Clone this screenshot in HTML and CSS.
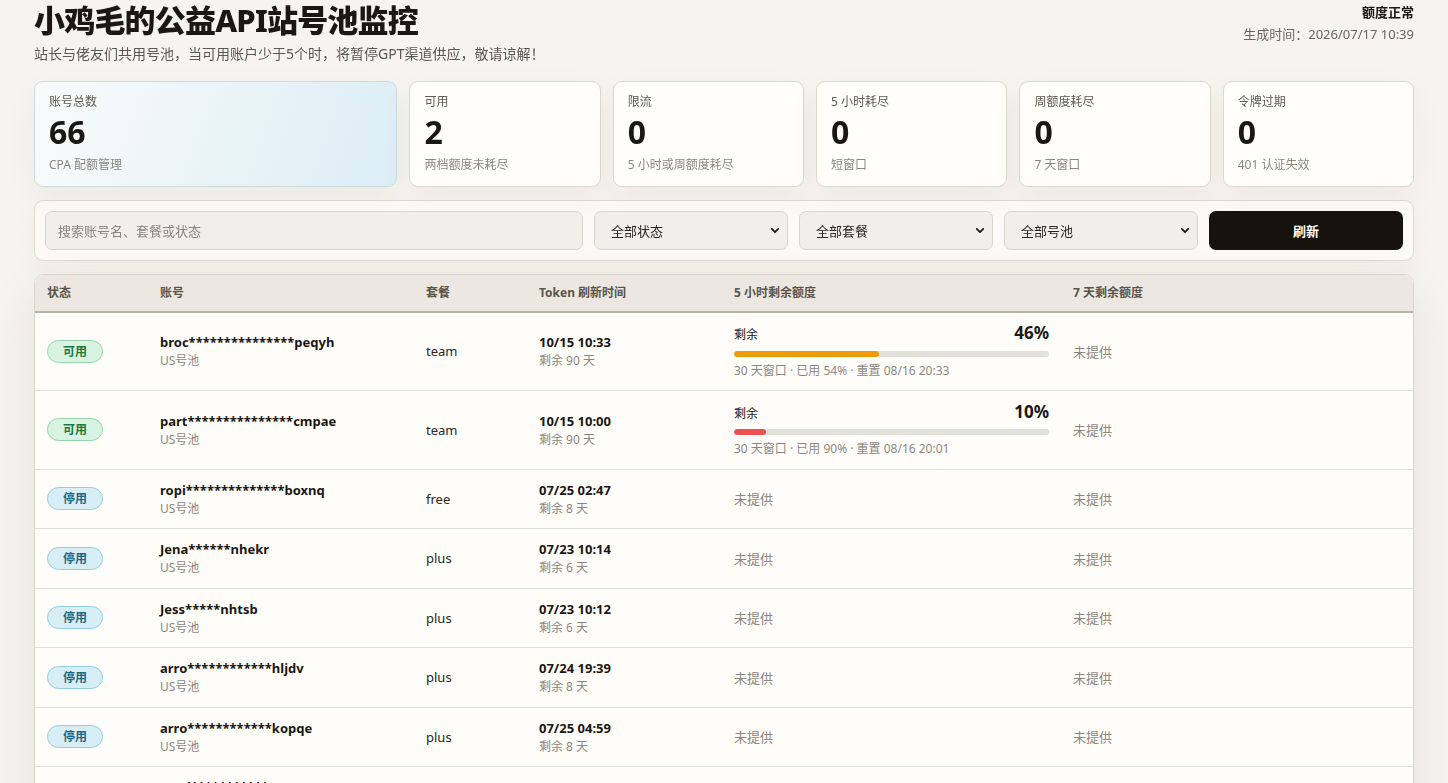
FILE: index.html
```html
<!DOCTYPE html>
<html lang="zh-CN">
<head>
  <meta charset="UTF-8">
  <meta name="viewport" content="width=device-width, initial-scale=1.0">
  <title>小鸡毛的公益API站号池监控</title>
  <link rel="stylesheet" href="styles.css">
</head>
<body>
  <div class="page">

    <!-- Header -->
    <header class="top">
      <div>
        <h1>小鸡毛的公益API站号池监控</h1>
        <p class="subtitle">站长与佬友们共用号池，当可用账户少于5个时，将暂停GPT渠道供应，敬请谅解！</p>
      </div>
      <div class="meta">
        <div class="meta-status">额度正常</div>
        <div class="meta-time">生成时间：2026/07/17 10:39</div>
      </div>
    </header>

    <!-- Summary cards -->
    <section class="stats">
      <div class="stat stat-main">
        <div class="stat-label">账号总数</div>
        <div class="stat-value">66</div>
        <div class="stat-note">CPA 配额管理</div>
      </div>
      <div class="stat">
        <div class="stat-label">可用</div>
        <div class="stat-value">2</div>
        <div class="stat-note">两档额度未耗尽</div>
      </div>
      <div class="stat">
        <div class="stat-label">限流</div>
        <div class="stat-value">0</div>
        <div class="stat-note">5 小时或周额度耗尽</div>
      </div>
      <div class="stat">
        <div class="stat-label">5 小时耗尽</div>
        <div class="stat-value">0</div>
        <div class="stat-note">短窗口</div>
      </div>
      <div class="stat">
        <div class="stat-label">周额度耗尽</div>
        <div class="stat-value">0</div>
        <div class="stat-note">7 天窗口</div>
      </div>
      <div class="stat">
        <div class="stat-label">令牌过期</div>
        <div class="stat-value">0</div>
        <div class="stat-note">401 认证失效</div>
      </div>
    </section>

    <!-- Filters -->
    <section class="filters">
      <input class="search" type="text" placeholder="搜索账号名、套餐或状态">
      <div class="select-wrap">
        <select><option>全部状态</option><option>可用</option><option>停用</option></select>
        <svg class="chevron" viewBox="0 0 10 6" width="8" height="5"><path d="M1 1l4 4 4-4" fill="none" stroke="#1a1714" stroke-width="2.2" stroke-linecap="round" stroke-linejoin="round"/></svg>
      </div>
      <div class="select-wrap">
        <select><option>全部套餐</option><option>team</option><option>plus</option><option>free</option></select>
        <svg class="chevron" viewBox="0 0 10 6" width="8" height="5"><path d="M1 1l4 4 4-4" fill="none" stroke="#1a1714" stroke-width="2.2" stroke-linecap="round" stroke-linejoin="round"/></svg>
      </div>
      <div class="select-wrap">
        <select><option>全部号池</option><option>US号池</option></select>
        <svg class="chevron" viewBox="0 0 10 6" width="8" height="5"><path d="M1 1l4 4 4-4" fill="none" stroke="#1a1714" stroke-width="2.2" stroke-linecap="round" stroke-linejoin="round"/></svg>
      </div>
      <button class="refresh">刷新</button>
    </section>

    <!-- Account table -->
    <div class="table-wrap">
      <table class="accounts">
        <colgroup>
          <col style="width:113px">
          <col style="width:266px">
          <col style="width:113px">
          <col style="width:195px">
          <col style="width:339px">
          <col>
        </colgroup>
        <thead>
          <tr>
            <th>状态</th>
            <th>账号</th>
            <th>套餐</th>
            <th>Token 刷新时间</th>
            <th>5 小时剩余额度</th>
            <th>7 天剩余额度</th>
          </tr>
        </thead>
        <tbody id="rows"></tbody>
      </table>
    </div>
  </div>

  <script>
    const accounts = [
      { ok: true, name: 'broc***************peqyh', plan: 'team', date: '10/15 10:33', left: '剩余 90 天', pct: 46, color: '#ef9a07', note: '30 天窗口 · 已用 54% · 重置 08/16 20:33' },
      { ok: true, name: 'part***************cmpae', plan: 'team', date: '10/15 10:00', left: '剩余 90 天', pct: 10, color: '#ec5050', note: '30 天窗口 · 已用 90% · 重置 08/16 20:01' },
      { ok: false, name: 'ropi**************boxnq', plan: 'free', date: '07/25 02:47', left: '剩余 8 天' },
      { ok: false, name: 'Jena******nhekr', plan: 'plus', date: '07/23 10:14', left: '剩余 6 天' },
      { ok: false, name: 'Jess*****nhtsb', plan: 'plus', date: '07/23 10:12', left: '剩余 6 天' },
      { ok: false, name: 'arro************hljdv', plan: 'plus', date: '07/24 19:39', left: '剩余 8 天' },
      { ok: false, name: 'arro************kopqe', plan: 'plus', date: '07/25 04:59', left: '剩余 8 天' },
      { ok: false, name: 'sand***********wqpxz', plan: 'plus', date: '07/25 17:30', left: '剩余 8 天' }
    ];

    // the rest of the pool (66 total) is paused
    const heads = ['mike', 'luna', 'kate', 'tomm', 'eric', 'alex', 'nina', 'ryan', 'zoey', 'owen'];
    const tails = ['qwert', 'zxcvb', 'plmok', 'ijnuh', 'ygvtf', 'rdxes', 'wazqa', 'mnbvc', 'lkjhg', 'poiuy'];
    const plans = ['plus', 'plus', 'free', 'team'];
    for (let i = accounts.length; i < 66; i++) {
      const day = 20 + (i % 8);
      accounts.push({
        ok: false,
        name: heads[i % 10] + '*'.repeat(6 + (i % 9)) + tails[(i * 3) % 10],
        plan: plans[i % 4],
        date: '07/' + day + ' ' + String(i % 24).padStart(2, '0') + ':' + String((i * 7) % 60).padStart(2, '0'),
        left: '剩余 ' + (day - 17) + ' 天'
      });
    }

    function quotaCell(a) {
      if (!a.pct) return '<span class="na">未提供</span>';
      return `
        <div class="quota-head"><span class="quota-label">剩余</span><span class="quota-pct">${a.pct}%</span></div>
        <div class="bar"><div class="bar-fill" style="width:${a.pct}%;background:${a.color}"></div></div>
        <div class="quota-note">${a.note}</div>`;
    }

    document.getElementById('rows').innerHTML = accounts.map(a => `
      <tr>
        <td><span class="badge ${a.ok ? 'badge-ok' : 'badge-off'}">${a.ok ? '可用' : '停用'}</span></td>
        <td><div class="acct-name">${a.name}</div><div class="sub">US号池</div></td>
        <td class="plan">${a.plan}</td>
        <td><div class="date">${a.date}</div><div class="sub">${a.left}</div></td>
        <td>${quotaCell(a)}</td>
        <td><span class="na">未提供</span></td>
      </tr>`).join('');
  </script>
</body>
</html>
```

FILE: styles.css
```css
* {
  box-sizing: border-box;
}
html {
  overflow: hidden;
}
body {
  margin: 0;
  background-color: #f6f4ef;
  color: #1a1714;
  font-family: "Noto Sans", "Noto Sans CJK SC", sans-serif;
}
.page {
  max-width: 1380px;
  margin: 0 auto;
}

/* Header */
.top {
  display: flex;
  justify-content: space-between;
  align-items: flex-start;
}
.top h1 {
  margin: 0;
  font-size: 31px;
  line-height: 40px;
  font-weight: 800;
  letter-spacing: -0.8px;
}
.subtitle {
  margin: 4px 0 0;
  font-size: 14px;
  line-height: 20px;
  color: #5b564f;
}
.meta {
  text-align: right;
  padding-top: 1px;
  font-size: 13px;
  line-height: 22px;
}
.meta-status {
  font-weight: 700;
}
.meta-time {
  color: #6b655d;
}

/* Summary cards */
.stats {
  display: grid;
  grid-template-columns: 1.9fr repeat(5, 1fr);
  gap: 12px;
  margin-top: 17px;
}
.stat {
  background-color: #fffefb;
  border: 1px solid #dcd7ce;
  border-radius: 9px;
  padding: 11px 14px 12px;
  box-shadow: 0 10px 30px rgba(80, 60, 30, 0.05);
}
.stat-main {
  background: linear-gradient(110deg, #f9fbfb 0%, #eaf4f8 50%, #dcedf5 100%);
  border-color: #cfdadf;
}
.stat-label {
  font-size: 12px;
  line-height: 18px;
  color: #5f5a52;
}
.stat-value {
  margin-top: 2px;
  font-size: 32px;
  line-height: 38px;
  font-weight: 700;
}
.stat-note {
  margin-top: 5px;
  font-size: 12px;
  line-height: 18px;
  color: #8c877f;
}

/* Filters */
.filters {
  display: grid;
  grid-template-columns: 1fr repeat(4, 194px);
  gap: 11px;
  margin-top: 13px;
  padding: 10px;
  background-color: #fbfaf7;
  border: 1px solid #dedad2;
  border-radius: 9px;
  box-shadow: 0 10px 30px rgba(80, 60, 30, 0.04);
}
.search,
.select-wrap select {
  width: 100%;
  height: 39px;
  background-color: #f1efea;
  border: 1px solid #d9d5cd;
  border-radius: 7px;
  font-family: inherit;
  font-size: 13px;
  color: #2a2622;
  outline: none;
}
.search {
  padding: 0 12px;
}
.search::placeholder {
  color: #8a857e;
}
.select-wrap {
  position: relative;
}
.select-wrap select {
  appearance: none;
  padding: 0 30px 0 16px;
}
.chevron {
  position: absolute;
  right: 9px;
  top: 17px;
  pointer-events: none;
}
.refresh {
  height: 39px;
  border: none;
  border-radius: 7px;
  background-color: #16130f;
  color: #fff;
  font-family: inherit;
  font-size: 13px;
  font-weight: 700;
}

/* Table */
.table-wrap {
  margin-top: 13px;
  height: 640px;
  overflow-y: auto;
  background-color: #fffdfa;
  border: 1px solid #d9d5cd;
  border-radius: 9px;
  box-shadow: 0 18px 50px rgba(70, 55, 30, 0.09);
}
.table-wrap::-webkit-scrollbar {
  width: 15px;
}
.table-wrap::-webkit-scrollbar-track {
  background-color: #fbfbfa;
}
.table-wrap::-webkit-scrollbar-thumb {
  background-color: #8b8b8b;
  border: 3px solid #fbfbfa;
  border-radius: 8px;
}
.accounts {
  width: 100%;
  border-collapse: separate;
  border-spacing: 0;
  table-layout: fixed;
}
.accounts th {
  position: sticky;
  top: 0;
  padding: 0 12px;
  line-height: 35.5px;
  text-align: left;
  font-size: 12px;
  font-weight: 700;
  color: #5a544b;
  background-color: #ece8e1;
  border-bottom: 2px solid #b8b2a7;
}
.accounts td {
  padding: 11px 12px;
  font-size: 13px;
  vertical-align: middle;
  border-bottom: 1px solid #e2ded7;
}
.badge {
  display: inline-block;
  padding: 0 15px;
  line-height: 21px;
  border: 1px solid;
  border-radius: 12px;
  font-size: 12px;
  font-weight: 700;
}
.badge-ok {
  background-color: #d9f3e3;
  border-color: #95d5ad;
  color: #1d7a40;
}
.badge-off {
  background-color: #d8eef6;
  border-color: #95cde0;
  color: #1b6987;
}
.acct-name,
.date {
  font-weight: 700;
  line-height: 19px;
}
.sub {
  font-size: 12px;
  line-height: 17.5px;
  color: #8c877f;
}
.plan {
  color: #2a2622;
}
.na {
  color: #8c877f;
}
.quota-head {
  display: flex;
  justify-content: space-between;
  align-items: center;
  height: 18px;
}
.quota-label {
  padding-top: 3px;
  font-size: 12px;
}
.quota-pct {
  font-size: 17px;
  font-weight: 700;
}
.bar {
  height: 6px;
  margin-top: 9px;
  border-radius: 3px;
  background-color: #e3e1dc;
  overflow: hidden;
}
.bar-fill {
  height: 100%;
  border-radius: 3px;
}
.quota-note {
  margin-top: 6px;
  font-size: 12px;
  line-height: 16.5px;
  color: #8c877f;
}
```
